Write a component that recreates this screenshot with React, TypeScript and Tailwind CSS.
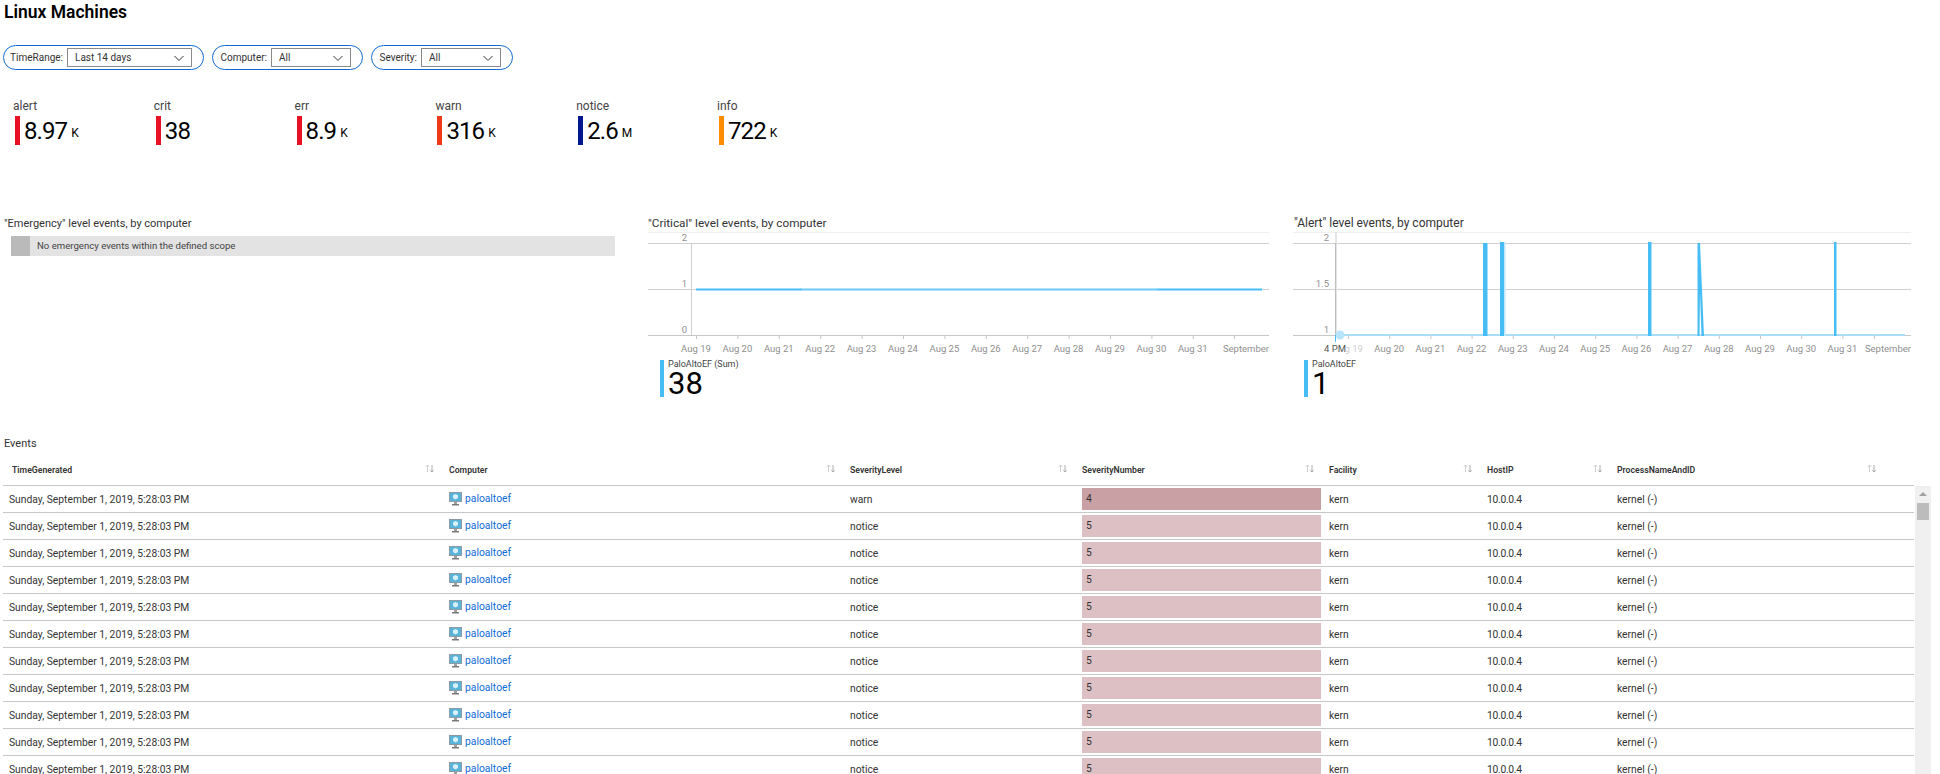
const KPIS = [
  { label: 'alert', value: '8.97', unit: 'K', color: 'bg-[#e81123]' },
  { label: 'crit', value: '38', unit: '', color: 'bg-[#e81123]' },
  { label: 'err', value: '8.9', unit: 'K', color: 'bg-[#e81123]' },
  { label: 'warn', value: '316', unit: 'K', color: 'bg-[#f03a17]' },
  { label: 'notice', value: '2.6', unit: 'M', color: 'bg-[#00188f]' },
  { label: 'info', value: '722', unit: 'K', color: 'bg-[#ff8c00]' },
]

const COLUMNS = ['TimeGenerated', 'Computer', 'SeverityLevel', 'SeverityNumber', 'Facility', 'HostIP', 'ProcessNameAndID']
const GRID = 'grid grid-cols-[446px_401px_232px_247px_158px_130px_297px]'
const DAYS = ['Aug 19', 'Aug 20', 'Aug 21', 'Aug 22', 'Aug 23', 'Aug 24', 'Aug 25', 'Aug 26', 'Aug 27', 'Aug 28', 'Aug 29', 'Aug 30', 'Aug 31']

const ROWS = Array.from({ length: 12 }, (_, i) => ({
  level: i === 0 ? 'warn' : 'notice',
  num: i === 0 ? '4' : '5',
}))

function Chevron() {
  return (
    <svg width="12" height="12" viewBox="0 0 12 12" fill="none" stroke="#333" strokeWidth="1">
      <path d="M1.5 4 L6 8.5 L10.5 4" />
    </svg>
  )
}

function Filter({ label, value, width, selectWidth }: { label: string; value: string; width: string; selectWidth: string }) {
  return (
    <div className={`flex h-[25px] items-center justify-end rounded-full border border-[#0f6cd6] pr-[11px] ${width}`}>
      <span className="mr-[4px] text-[10px] text-[#333]">{label}</span>
      <div className={`flex h-[19px] items-center justify-between border border-[#8a8a8a] pl-[7px] pr-[6px] text-[10px] text-[#333] ${selectWidth}`}>
        {value}
        <Chevron />
      </div>
    </div>
  )
}

function SortIcon() {
  return (
    <svg width="10" height="9" viewBox="0 0 10 9" fill="none" strokeWidth="0.8" className="mt-[-5px] shrink-0">
      <path d="M2.5 8 V1 M0.8 2.8 L2.5 1 L4.2 2.8" stroke="#c4c4c4" />
      <path d="M7 1 V8 M5.3 6.2 L7 8 L8.7 6.2" stroke="#9a9a9a" />
    </svg>
  )
}

function VmIcon() {
  return (
    <svg width="13" height="14" viewBox="0 0 13 14" className="shrink-0">
      <rect x="0" y="0" width="13" height="10" fill="#8f9ba3" />
      <rect x="1" y="1" width="11" height="8" fill="#59b4d9" />
      <path d="M6.5 2 L9 3.3 V6 L6.5 7.4 L4 6 V3.3 Z" fill="#d8f0f8" />
      <rect x="5" y="10" width="3" height="2" fill="#a0a0a0" />
      <rect x="3" y="12" width="7" height="1.5" fill="#7a7a7a" />
    </svg>
  )
}

function Legend({ label, value }: { label: string; value: string }) {
  return (
    <div className="mt-[3px] flex h-[37px] gap-[4px]">
      <div className="h-full w-[4px] bg-[#47bdf5]" />
      <div>
        <div className="text-[9px] leading-[9px] text-[#444]">{label}</div>
        <div className="text-[31px] leading-[30px] text-black">{value}</div>
      </div>
    </div>
  )
}

function CriticalChart() {
  return (
    <svg width="622" height="125" className="block" fontSize="9.5" fill="#8f8f8f">
      <line x1="0" x2="621" y1="0.5" y2="0.5" stroke="#f0f0f0" />
      <line x1="0" x2="621" y1="11.5" y2="11.5" stroke="#d0d0d0" />
      <line x1="0" x2="621" y1="57.5" y2="57.5" stroke="#d0d0d0" />
      <line x1="0" x2="621" y1="103.5" y2="103.5" stroke="#c8c8c8" />
      <line x1="43.5" x2="43.5" y1="11" y2="103" stroke="#d0d0d0" />
      <text x="39" y="9" textAnchor="end">2</text>
      <text x="39" y="55" textAnchor="end">1</text>
      <text x="39" y="101" textAnchor="end">0</text>
      <line x1="48" x2="154" y1="57.5" y2="57.5" stroke="#47bdf5" strokeWidth="2" />
      <line x1="154" x2="509" y1="57.5" y2="57.5" stroke="#6cc9f6" strokeWidth="2" />
      <line x1="509" x2="614" y1="57.5" y2="57.5" stroke="#47bdf5" strokeWidth="2" />
      {DAYS.map((d, i) => (
        <g key={d}>
          <line x1={48.5 + i * 41.4} x2={48.5 + i * 41.4} y1="103" y2="107" stroke="#c8c8c8" />
          <text x={48 + i * 41.4} y="120" textAnchor="middle">{d}</text>
        </g>
      ))}
      <line x1="586.5" x2="586.5" y1="103" y2="107" stroke="#c8c8c8" />
      <text x="621" y="120" textAnchor="end">September</text>
    </svg>
  )
}

function AlertChart() {
  return (
    <svg width="618" height="125" className="block" fontSize="9.5" fill="#8f8f8f">
      <line x1="0" x2="618" y1="0.5" y2="0.5" stroke="#f0f0f0" />
      <line x1="0" x2="618" y1="11.5" y2="11.5" stroke="#d0d0d0" />
      <line x1="0" x2="618" y1="57.5" y2="57.5" stroke="#d0d0d0" />
      <line x1="0" x2="618" y1="103.5" y2="103.5" stroke="#c8c8c8" />
      <rect x="42" y="0" width="2" height="103" fill="#e4e4e4" />
      <line x1="42.5" x2="42.5" y1="11" y2="103" stroke="#bdbdbd" />
      <text x="36" y="9" textAnchor="end">2</text>
      <text x="36" y="55" textAnchor="end">1.5</text>
      <text x="36" y="101" textAnchor="end">1</text>
      <line x1="48" x2="612" y1="103" y2="103" stroke="#a9def9" strokeWidth="2" />
      <circle cx="47" cy="103" r="4.5" fill="#b5e4fb" />
      <rect x="190" y="11" width="4.5" height="93" fill="#47bdf5" />
      <rect x="207" y="10" width="4" height="94" fill="#47bdf5" />
      <rect x="211" y="10" width="1.5" height="94" fill="#bfe8fc" />
      <rect x="355" y="10" width="3.5" height="94" fill="#47bdf5" />
      <path d="M404.5 11 L407 11 L411 104 L408.5 104 L407 60 L406.5 104 L404.5 104 Z" fill="#47bdf5" />
      <rect x="541" y="10" width="2.5" height="94" fill="#47bdf5" />
      {DAYS.map((d, i) => (
        <g key={d}>
          <line x1={55.5 + i * 41.2} x2={55.5 + i * 41.2} y1="103" y2="107" stroke="#c8c8c8" />
          <text x={55 + i * 41.2} y="120" textAnchor="middle" fill={i === 0 ? '#cfcfcf' : '#8f8f8f'}>{d}</text>
        </g>
      ))}
      <line x1="581.5" x2="581.5" y1="103" y2="107" stroke="#c8c8c8" />
      <text x="618" y="120" textAnchor="end">September</text>
      <rect x="30" y="110" width="23" height="13" fill="#fff" fillOpacity="0.85" />
      <line x1="42.5" x2="42.5" y1="103" y2="110" stroke="#47bdf5" />
      <text x="42" y="120" textAnchor="middle" fill="#555">4 PM</text>
    </svg>
  )
}

export default function App() {
  return (
    <div className="h-[774px] w-[1940px] overflow-hidden bg-white font-['Roboto',sans-serif] text-[#333]">
      <h1 className="h-[45px] pl-[4px] pt-[1px] text-[17.5px] leading-[22px] font-semibold text-black">Linux Machines</h1>

      <div className="flex gap-[8px] pl-[3px]">
        <Filter label="TimeRange:" value="Last 14 days" width="w-[201px]" selectWidth="w-[125px]" />
        <Filter label="Computer:" value="All" width="w-[151px]" selectWidth="w-[80px]" />
        <Filter label="Severity:" value="All" width="w-[142px]" selectWidth="w-[80px]" />
      </div>

      <div className="mt-[27px] flex pl-[15px]">
        {KPIS.map((k) => (
          <div key={k.label} className="w-[140.8px]">
            <div className="ml-[-2px] h-[18px] text-[12px] leading-[18px] text-[#444]">{k.label}</div>
            <div className="mt-[1px] flex h-[29px] items-center gap-[4px]">
              <div className={`h-full w-[5px] ${k.color}`} />
              <span className="text-[24px] leading-none tracking-[-0.9px] text-black">{k.value}</span>
              {k.unit && <span className="mt-[5px] text-[12px] leading-none text-black">{k.unit}</span>}
            </div>
          </div>
        ))}
      </div>

      <div className="mt-[71px] flex">
        <div className="w-[648px] pl-[4px]">
          <div className="h-[20px] text-[11px] leading-[15px] text-[#333]">"Emergency" level events, by computer</div>
          <div className="ml-[7px] flex h-[20px] w-[604px] items-center bg-[#e3e3e3]">
            <div className="h-full w-[19px] bg-[#bababa]" />
            <span className="ml-[7px] text-[9.6px] text-[#444]">No emergency events within the defined scope</span>
          </div>
        </div>
        <div className="w-[645px]">
          <div className="h-[16px] text-[11.75px] leading-[15px] text-[#333]">"Critical" level events, by computer</div>
          <CriticalChart />
          <div className="pl-[12px]">
            <Legend label="PaloAltoEF (Sum)" value="38" />
          </div>
        </div>
        <div className="w-[620px]">
          <div className="h-[16px] pl-[1px] text-[12px] leading-[15px] text-[#333]">"Alert" level events, by computer</div>
          <AlertChart />
          <div className="pl-[11px]">
            <Legend label="PaloAltoEF" value="1" />
          </div>
        </div>
      </div>

      <div className="mt-[38px] h-[17px] pl-[4px] text-[11px] leading-[17px] text-[#333]">Events</div>
      <div className={`${GRID} mt-[6px] ml-[3px] h-[28px] w-[1911px] items-center border-b border-[#c8c8c8] pb-[1px]`}>
        {COLUMNS.map((c, i) => (
          <div key={c} className={`flex items-center justify-between text-[8.7px] font-semibold text-[#333] ${i === 0 ? 'pl-[9px]' : ''} ${i === 6 ? 'pr-[37px]' : 'pr-[14px]'}`}>
            {c}
            <SortIcon />
          </div>
        ))}
      </div>

      <div className="ml-[3px] flex">
        <div className="w-[1911px]">
          {ROWS.map((r, i) => (
            <div key={i} className={`${GRID} h-[27px] items-center border-b border-[#c8c8c8] text-[10.3px] text-[#333]`}>
              <div className="pl-[6px] pt-[2px]">Sunday, September 1, 2019, 5:28:03 PM</div>
              <div className="mt-[-1px] flex items-center gap-[3px] text-[#0f6cd6]">
                <VmIcon />
                paloaltoef
              </div>
              <div className="pt-[2px]">{r.level}</div>
              <div className="h-[22px] pr-[8px]">
                <div className={`h-full pl-[4px] leading-[22px] ${r.num === '4' ? 'bg-[#c9a1a5]' : 'bg-[#ddc0c4]'}`}>{r.num}</div>
              </div>
              <div className="pt-[2px]">kern</div>
              <div className="pt-[2px] tracking-[-0.3px]">10.0.0.4</div>
              <div className="pt-[2px]">kernel (-)</div>
            </div>
          ))}
        </div>
        <div className="ml-[1px] flex w-[16px] flex-col items-center bg-[#f0f0f0]">
          <div className="mt-[6px] h-0 w-0 border-x-[4px] border-b-[4px] border-x-transparent border-b-[#a0a0a0]" />
          <div className="mt-[7px] h-[17px] w-[12px] bg-[#bcbcbc]" />
        </div>
      </div>
    </div>
  )
}
